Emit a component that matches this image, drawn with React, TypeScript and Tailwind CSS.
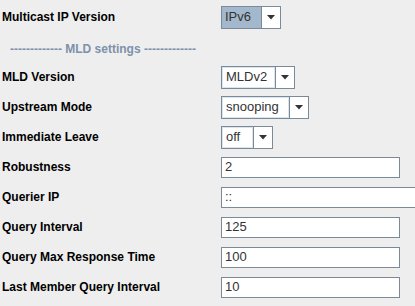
import { ReactNode } from "react";

function Arrow() {
  return (
    <svg width="8" height="5" viewBox="0 0 8 5">
      <path d="M0 0h8L4 4.5z" fill="#333" />
    </svg>
  );
}

function Combo({ value, width, selected }: { value: string; width: string; selected?: boolean }) {
  return (
    <div className={`flex h-[23px] ${width} border border-[#7a8a99] bg-white`}>
      <div
        className={`flex-1 flex items-center pl-[3px] text-[13px] text-[#333] ${
          selected ? "bg-[#a3b8cc]" : "border border-[#dbe5ef]"
        }`}
      >
        {value}
      </div>
      <div className="w-[19px] flex items-center justify-center border-l border-[#7a8a99] bg-white">
        <Arrow />
      </div>
    </div>
  );
}

function Field({ value, width = "w-[179px]" }: { value: string; width?: string }) {
  return (
    <div className={`h-[21px] ${width} shrink-0 border border-[#7a8a99] bg-white flex items-center pl-[3px] text-[13px] text-[#333]`}>
      {value}
    </div>
  );
}

function Row({ label, children }: { label: string; children: ReactNode }) {
  return (
    <div className="flex items-center h-[30px]">
      <div className="w-[221px] shrink-0 pl-[2px] font-bold text-[12px] text-black">{label}</div>
      {children}
    </div>
  );
}

export default function App() {
  return (
    <div
      className="w-[415px] h-[306px] overflow-hidden bg-[#eeeeee] pt-[2px]"
      style={{ fontFamily: '"Liberation Sans", Arial, sans-serif' }}
    >
      <Row label="Multicast IP Version">
        <Combo value="IPv6" width="w-[60px]" selected />
      </Row>
      <div className="h-[30px] flex items-center pl-[10px] pt-[3px] font-bold text-[12px] text-[#7d92aa]">
        ------------- MLD settings -------------
      </div>
      <Row label="MLD Version">
        <Combo value="MLDv2" width="w-[74px]" />
      </Row>
      <Row label="Upstream Mode">
        <Combo value="snooping" width="w-[88px]" />
      </Row>
      <Row label="Immediate Leave">
        <Combo value="off" width="w-[52px]" />
      </Row>
      <Row label="Robustness">
        <Field value="2" />
      </Row>
      <Row label="Querier IP">
        <Field value="::" width="w-[220px]" />
      </Row>
      <Row label="Query Interval">
        <Field value="125" />
      </Row>
      <Row label="Query Max Response Time">
        <Field value="100" />
      </Row>
      <Row label="Last Member Query Interval">
        <Field value="10" />
      </Row>
    </div>
  );
}
